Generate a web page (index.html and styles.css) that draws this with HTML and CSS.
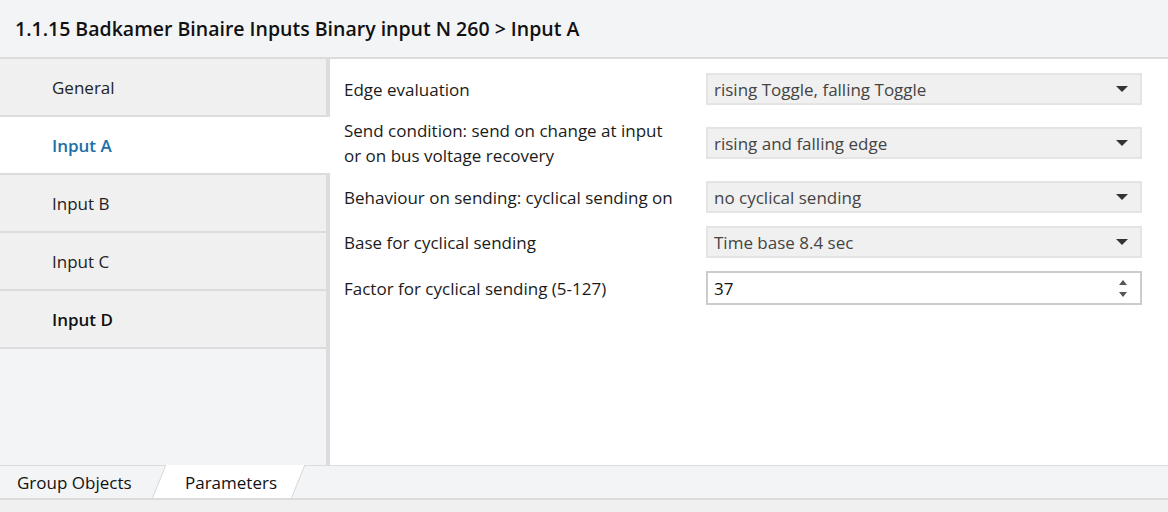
FILE: index.html
```html
<!DOCTYPE html>
<html>
<head>
<meta charset="utf-8">
<link rel="stylesheet" href="styles.css">
</head>
<body>
<div class="app">
  <header class="title-bar">1.1.15 Badkamer Binaire Inputs Binary input N 260 &gt; Input A</header>
  <div class="main">
    <nav class="sidebar">
      <div class="nav-item">General</div>
      <div class="nav-item active">Input A</div>
      <div class="nav-item">Input B</div>
      <div class="nav-item">Input C</div>
      <div class="nav-item strong">Input D</div>
    </nav>
    <section class="content">
      <div class="row">
        <div class="label">Edge evaluation</div>
        <div class="select"><span>rising Toggle, falling Toggle</span><i class="caret"></i></div>
      </div>
      <div class="row">
        <div class="label">Send condition: send on change at input<br>or on bus voltage recovery</div>
        <div class="select"><span>rising and falling edge</span><i class="caret"></i></div>
      </div>
      <div class="row">
        <div class="label">Behaviour on sending: cyclical sending on</div>
        <div class="select"><span>no cyclical sending</span><i class="caret"></i></div>
      </div>
      <div class="row">
        <div class="label">Base for cyclical sending</div>
        <div class="select"><span>Time base 8.4 sec</span><i class="caret"></i></div>
      </div>
      <div class="row">
        <div class="label">Factor for cyclical sending (5-127)</div>
        <div class="number"><span>37</span><span class="spin"><i class="up"></i><i class="down"></i></span></div>
      </div>
    </section>
  </div>
  <footer class="tabs">
    <div class="tab">Group Objects</div>
    <div class="tab active">Parameters</div>
  </footer>
  <div class="bottom-strip"></div>
</div>
</body>
</html>
```
FILE: styles.css
```css
* { box-sizing: border-box; }
html, body { margin: 0; padding: 0; }
body {
  font-family: "Open Sans", "Noto Sans", sans-serif;
  color: #1b1b1b;
  background: #f0f0f0;
}
.app {
  width: 1168px;
  height: 512px;
  display: flex;
  flex-direction: column;
  overflow: hidden;
}
.title-bar {
  height: 59px;
  flex: none;
  background: #f3f4f6;
  border-bottom: 2px solid #dcdcde;
  padding: 15px 0 0 15px;
  font-size: 19.5px;
  font-weight: 600;
  color: #111;
}
.main {
  flex: none;
  height: 406px;
  display: flex;
}
.sidebar {
  width: 330px;
  flex: none;
  background: #f3f4f6;
  border-right: 4px solid #dcdcde;
}
.nav-item {
  height: 58px;
  border-bottom: 2px solid #dcdcde;
  background: #f0f0f0;
  padding-left: 52px;
  display: flex;
  align-items: center;
  font-size: 17px;
  color: #222;
}
.nav-item.active {
  background: #fff;
  margin-right: -4px;
  color: #1c6ea8;
  font-weight: 600;
}
.nav-item.strong {
  font-weight: 600;
  color: #111;
}
.content {
  flex: 1;
  background: #fff;
  padding: 14px 26px 0 14px;
  display: flex;
  flex-direction: column;
  gap: 13px;
}
.row {
  display: flex;
  align-items: center;
}
.label {
  width: 362px;
  flex: none;
  font-size: 17px;
  line-height: 25px;
  color: #1b1b1b;
}
.select, .number {
  flex: 1;
  height: 32px;
  display: flex;
  align-items: center;
  justify-content: space-between;
  padding: 0 12px 0 6px;
  font-size: 17px;
}
.select {
  background: #f0f0f0;
  border: 2px solid #e4e4e4;
  color: #444;
}
.number {
  background: #fff;
  border: 2px solid #cccccc;
  color: #111;
  height: 34px;
  padding-right: 13px;
}
.caret {
  width: 0;
  height: 0;
  border-left: 6px solid transparent;
  border-right: 6px solid transparent;
  border-top: 6px solid #333;
}
.spin {
  display: flex;
  flex-direction: column;
  gap: 7px;
}
.spin .up {
  width: 0; height: 0;
  border-left: 4px solid transparent;
  border-right: 4px solid transparent;
  border-bottom: 5px solid #555;
}
.spin .down {
  width: 0; height: 0;
  border-left: 4px solid transparent;
  border-right: 4px solid transparent;
  border-top: 5px solid #555;
}
.tabs {
  flex: none;
  height: 35px;
  background: #f3f4f6;
  border-top: 1px solid #dcdcde;
  border-bottom: 2px solid #dcdcde;
  display: flex;
  align-items: stretch;
}
.tab {
  position: relative;
  display: flex;
  align-items: center;
  font-size: 17px;
  color: #111;
}
.tab:first-child {
  padding: 0 0 0 17px;
  width: 152px;
}
.tab.active {
  width: 152px;
  padding-left: 33px;
  isolation: isolate;
}
.tab.active::before {
  content: "";
  position: absolute;
  left: 0;
  top: -1px;
  bottom: 0;
  width: 138px;
  background: #fff;
  border-left: 1.5px solid #d4d4d6;
  border-right: 1.5px solid #d4d4d6;
  transform: skewX(-22deg);
  transform-origin: bottom left;
  z-index: -1;
}
.bottom-strip {
  flex: 1;
  background: #f0f0f0;
}
```
